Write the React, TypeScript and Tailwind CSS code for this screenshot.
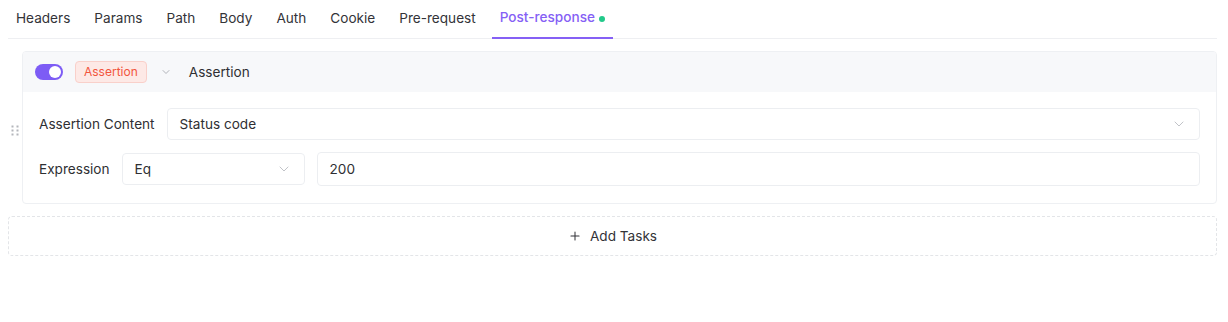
import { ChevronDown, Plus } from "lucide-react";

const tabs = ["Headers", "Params", "Path", "Body", "Auth", "Cookie", "Pre-request", "Post-response"];

function DragHandle() {
  return (
    <svg width="8" height="11" viewBox="0 0 8 11" className="text-[#b4b6bb]">
      {[1.5, 6.5].map((x) =>
        [1.5, 5.5, 9.5].map((y) => <rect key={`${x}-${y}`} x={x - 1} y={y - 1} width="2" height="2" fill="currentColor" />)
      )}
    </svg>
  );
}

export default function App() {
  return (
    <div className="w-[1228px] h-[322px] bg-white pl-2 pr-[11px] text-[13.6px] text-[#2f2f33] font-['Inter','Liberation_Sans',sans-serif]">
      {/* Tabs */}
      <div className="flex gap-2 border-b border-[#eeeff2] h-[39px]">
        {tabs.map((t) => {
          const active = t === "Post-response";
          return (
            <div
              key={t}
              className={
                active
                  ? "flex items-center gap-1 px-2 pb-[2px] h-[39px] border-b-2 border-[#8560f5] text-[#8560f5] font-medium"
                  : "flex items-center px-2 pb-[2px] h-[39px] text-[#333338]"
              }
            >
              {t}
              {active && <span className="w-[6px] h-[6px] rounded-full bg-[#22c98a] mt-[2px]" />}
            </div>
          );
        })}
      </div>

      {/* Task card */}
      <div className="flex items-start mt-3">
        <div className="w-[14px] flex justify-center pt-[74px]">
          <DragHandle />
        </div>
        <div className="flex-1 border border-[#eef0f3] rounded-[4px] overflow-hidden">
          <div className="h-[40px] bg-[#f7f8fa] flex items-center pl-3">
            <div className="w-[28px] h-[16px] rounded-full bg-[#7d5cf5] flex items-center justify-end pr-[2px]">
              <span className="w-[12px] h-[12px] rounded-full bg-white" />
            </div>
            <span className="ml-3 h-[22px] px-2 flex items-center rounded-[4px] bg-[#fde9e6] border border-[#f9d0ca] text-[#f2553d] text-[12px]">
              Assertion
            </span>
            <ChevronDown className="ml-[13px] w-[12px] h-[12px] text-[#9a9ca3]" strokeWidth={1.5} />
            <span className="ml-[17px]">Assertion</span>
          </div>
          <div className="flex flex-col gap-3 px-4 pt-4 pb-[17px]">
            <div className="flex items-center gap-3">
              <span>Assertion Content</span>
              <div className="flex-1 h-[32px] border border-[#eceef1] rounded-[4px] flex items-center justify-between px-3">
                <span>Status code</span>
                <ChevronDown className="w-[16px] h-[16px] text-[#b5b7bd]" strokeWidth={1.25} />
              </div>
            </div>
            <div className="flex items-center">
              <span>Expression</span>
              <div className="ml-3 w-[183px] h-[32px] border border-[#eceef1] rounded-[4px] flex items-center justify-between px-3">
                <span>Eq</span>
                <ChevronDown className="w-[16px] h-[16px] text-[#b5b7bd]" strokeWidth={1.25} />
              </div>
              <div className="ml-3 flex-1 h-[34px] border border-[#eceef1] rounded-[4px] flex items-center px-3">
                200
              </div>
            </div>
          </div>
        </div>
      </div>

      {/* Add tasks */}
      <div className="mt-3 h-[40px] border border-dashed border-[#e3e5e8] rounded-[4px] flex items-center justify-center gap-2 text-[#333338]">
        <Plus className="w-[14px] h-[14px]" strokeWidth={1.75} />
        <span>Add Tasks</span>
      </div>
    </div>
  );
}
